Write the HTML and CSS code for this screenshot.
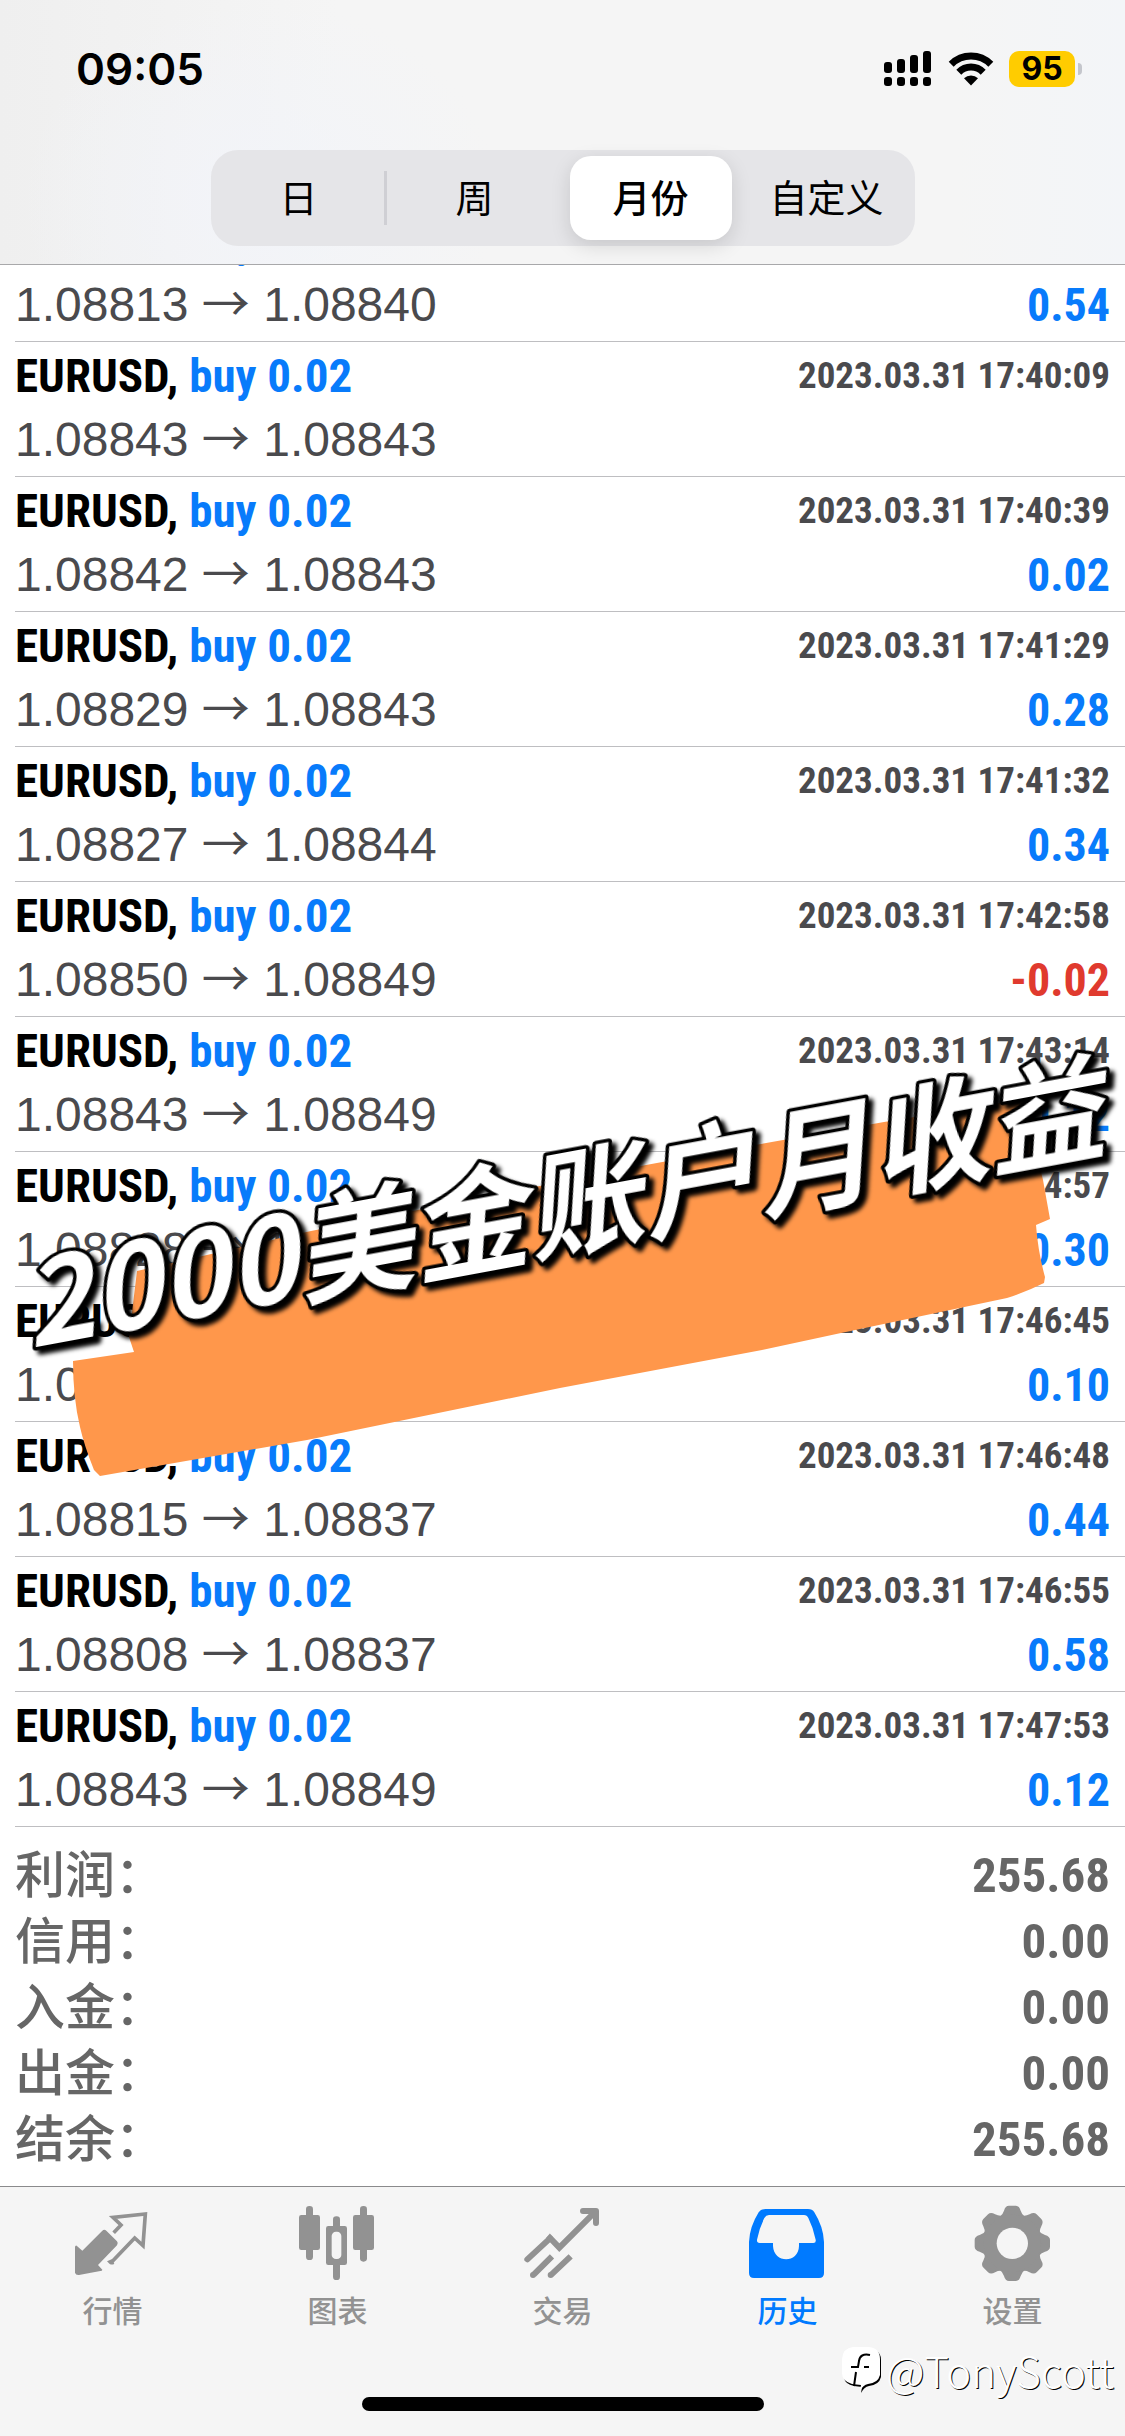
FILE: index.html
```
<!DOCTYPE html>
<html lang="zh-CN">
<head>
<meta charset="utf-8">
<meta name="viewport" content="width=device-width, initial-scale=1">
<title>历史</title>
<link rel="stylesheet" href="styles.css">
</head>
<body>
<div class="app">
  <header class="header">
    <div class="status">
      <time class="clock">09:05</time>
      <div class="status-icons">
        <svg class="signal" viewBox="0 0 48 36" aria-hidden="true">
          <rect x="0" y="11" width="8" height="11" rx="3"/><rect x="13" y="8" width="8" height="14" rx="3"/><rect x="26" y="4" width="8" height="18" rx="3"/><rect x="39" y="0" width="8" height="22" rx="3"/>
          <rect x="0" y="26" width="8" height="9" rx="3"/><rect x="13" y="26" width="8" height="9" rx="3"/><rect x="26" y="26" width="8" height="9" rx="3"/><rect x="39" y="26" width="8" height="9" rx="3"/>
        </svg>
        <svg class="wifi" viewBox="0 0 46 34" aria-hidden="true">
          <g fill="none" stroke="#000" stroke-width="7"><path d="M3.200 12.200a28 28 0 0 1 39.600 0"/><path d="M10.800 20.200a17.200 17.200 0 0 1 24.400 0"/></g>
          <path d="M23 33.500l-7-7.200a10 10 0 0 1 14 0z"/>
        </svg>
        <span class="battery">95</span><span class="battery-tip"></span>
      </div>
    </div>
    <form class="segments">
      <label class="segment"><input type="radio" name="period"><span>日</span></label>
      <label class="segment"><input type="radio" name="period"><span>周</span></label>
      <label class="segment"><input type="radio" name="period" checked><span>月份</span></label>
      <label class="segment"><input type="radio" name="period"><span>自定义</span></label>
    </form>
  </header>

  <main class="history">
    <ul class="deals">
      <li class="deal"><b class="symbol">EURUSD, <span class="side">buy 0.02</span></b><time class="when">2023.03.31 17:40:05</time><span class="prices">1.08813 <i class="arrow">→</i> 1.08840</span><b class="profit">0.54</b></li>
      <li class="deal"><b class="symbol">EURUSD, <span class="side">buy 0.02</span></b><time class="when">2023.03.31 17:40:09</time><span class="prices">1.08843 <i class="arrow">→</i> 1.08843</span></li>
      <li class="deal"><b class="symbol">EURUSD, <span class="side">buy 0.02</span></b><time class="when">2023.03.31 17:40:39</time><span class="prices">1.08842 <i class="arrow">→</i> 1.08843</span><b class="profit">0.02</b></li>
      <li class="deal"><b class="symbol">EURUSD, <span class="side">buy 0.02</span></b><time class="when">2023.03.31 17:41:29</time><span class="prices">1.08829 <i class="arrow">→</i> 1.08843</span><b class="profit">0.28</b></li>
      <li class="deal"><b class="symbol">EURUSD, <span class="side">buy 0.02</span></b><time class="when">2023.03.31 17:41:32</time><span class="prices">1.08827 <i class="arrow">→</i> 1.08844</span><b class="profit">0.34</b></li>
      <li class="deal"><b class="symbol">EURUSD, <span class="side">buy 0.02</span></b><time class="when">2023.03.31 17:42:58</time><span class="prices">1.08850 <i class="arrow">→</i> 1.08849</span><b class="profit loss">-0.02</b></li>
      <li class="deal"><b class="symbol">EURUSD, <span class="side">buy 0.02</span></b><time class="when">2023.03.31 17:43:14</time><span class="prices">1.08843 <i class="arrow">→</i> 1.08849</span><b class="profit">0.12</b></li>
      <li class="deal"><b class="symbol">EURUSD, <span class="side">buy 0.02</span></b><time class="when">2023.03.31 17:44:57</time><span class="prices">1.08828 <i class="arrow">→</i> 1.08843</span><b class="profit">0.30</b></li>
      <li class="deal"><b class="symbol">EURUSD, <span class="side">buy 0.02</span></b><time class="when">2023.03.31 17:46:45</time><span class="prices">1.08832 <i class="arrow">→</i> 1.08837</span><b class="profit">0.10</b></li>
      <li class="deal"><b class="symbol">EURUSD, <span class="side">buy 0.02</span></b><time class="when">2023.03.31 17:46:48</time><span class="prices">1.08815 <i class="arrow">→</i> 1.08837</span><b class="profit">0.44</b></li>
      <li class="deal"><b class="symbol">EURUSD, <span class="side">buy 0.02</span></b><time class="when">2023.03.31 17:46:55</time><span class="prices">1.08808 <i class="arrow">→</i> 1.08837</span><b class="profit">0.58</b></li>
      <li class="deal"><b class="symbol">EURUSD, <span class="side">buy 0.02</span></b><time class="when">2023.03.31 17:47:53</time><span class="prices">1.08843 <i class="arrow">→</i> 1.08849</span><b class="profit">0.12</b></li>
    </ul>
    <dl class="totals">
      <div class="total"><dt>利润：</dt><dd>255.68</dd></div>
      <div class="total"><dt>信用：</dt><dd>0.00</dd></div>
      <div class="total"><dt>入金：</dt><dd>0.00</dd></div>
      <div class="total"><dt>出金：</dt><dd>0.00</dd></div>
      <div class="total"><dt>结余：</dt><dd>255.68</dd></div>
    </dl>
    <svg class="banner" viewBox="0 0 1125 450">
      <path fill="#ff974b" d="M137 231L311 191L646 125L755 105L884 82L1005 62L1024 60L1043 140L1050 179L1036 185Q1038 212 1045 237L1044 243Q1026 252 1007 258L841 293L762 310L560 348L307 400L100 436L94 430Q84 405 80 387Q73 358 73 321L134 312L129 297Z"/>
      <g class="banner-text" transform="translate(31 308) rotate(-10.500)"><text>2000美金账户月收益</text></g>
    </svg>
  </main>

  <footer class="footer">
    <nav class="tabs">
      <a class="tab" href="#quotes">
        <svg viewBox="0 0 225 225" aria-hidden="true"><path d="M5 119L22 134L82 74Q88 69 94 74L126 106Q131 112 126 118L69 177L82 191Q82 195 76 195L12 207Q2 208 0 200V123Q1 117 5 119Z"/><path fill="none" stroke="currentColor" stroke-width="11" stroke-linecap="butt" d="M116 80L138 57L114 34L211 24L204 119L179 96L108 170"/><path d="M96 166l8 8q8 4 14-1l-8-13z"/></svg>
        <span>行情</span></a>
      <a class="tab" href="#charts">
        <svg viewBox="3 0 225 225" aria-hidden="true"><rect x="21" y="0" width="21" height="162" rx="10"/><rect x="0" y="27" width="63" height="105" rx="7"/><rect x="102" y="31" width="21" height="191" rx="10"/><rect x="81" y="60" width="63" height="117" rx="7"/><rect x="98" y="77" width="29" height="82" rx="13" fill="#f5f5f5"/><rect x="183" y="0" width="21" height="167" rx="10"/><rect x="162" y="27" width="63" height="105" rx="7"/></svg>
        <span>图表</span></a>
      <a class="tab" href="#trade">
        <svg viewBox="0 0 225 225" aria-hidden="true"><g fill="none" stroke="currentColor" stroke-width="18"><path stroke-linecap="round" d="M7 160L75 97"/><path d="M70 102L75 96L103 125L214 14"/><path stroke-linecap="round" stroke-linejoin="round" d="M174 15H213V51"/><path d="M81 151L26 206M137 151L79 206"/></g><circle cx="24" cy="207" r="9"/><circle cx="77" cy="207" r="9"/></svg>
        <span>交易</span></a>
      <a class="tab active" href="#history">
        <svg viewBox="0 0 225 225" aria-hidden="true"><path fill-rule="evenodd" d="M47 9H174Q187 9 193 19Q220 62 222 108V201Q222 216 207 216H12Q-3 216-3 201V108Q-1 62 26 19Q33 9 47 9ZM57 27Q48 27 43 36Q28 66 21 101Q20 111 29 111H69V120C71 173 146 173 147 120V111H190Q199 111 197 101Q190 66 175 36Q171 27 162 27Z"/></svg>
        <span>历史</span></a>
      <a class="tab" href="#settings">
        <svg viewBox="-112 -112 225 225" aria-hidden="true"><g><path id="tooth" d="M-38-80Q-29-85-25-98Q-21-113-10-113H10Q21-113 25-98Q29-85 38-80L0 0Z"/><use href="#tooth" transform="rotate(45)"/><use href="#tooth" transform="rotate(90)"/><use href="#tooth" transform="rotate(135)"/><use href="#tooth" transform="rotate(180)"/><use href="#tooth" transform="rotate(225)"/><use href="#tooth" transform="rotate(270)"/><use href="#tooth" transform="rotate(315)"/><circle r="86"/></g><circle r="47" fill="#f5f5f5"/></svg>
        <span>设置</span></a>
    </nav>
    <div class="home-bar"></div>
    <div class="credit">
      <svg class="credit-logo" viewBox="0 0 40 46" aria-hidden="true"><path fill="#000" d="M34 4Q39 6 39 13V30Q37 38 27 39Q22 40 19 46L20 40L12 39Q3 37 2 31Z"/><path fill="#fff" d="M11 0H27Q38 1 38 12V28Q36 36 26 37Q21 38 18 44L19 38L10 37Q0 34 0 26V12Q1 1 11 0Z"/><path fill="none" stroke="#000" stroke-width="2" d="M28 8Q18 6 17 14L16 20H9M22 20H27M14 25L12 39"/></svg>
      <span>@TonyScott</span>
    </div>
  </footer>
</div>
</body>
</html>
```
FILE: styles.css
```
* { box-sizing: border-box; }
body {
  margin: 0;
  background: #fff;
  color: #000;
  font-family: "Liberation Sans", "Noto Sans CJK SC", sans-serif;
}
ul, dl, dd { margin: 0; padding: 0; }
.app { display: flex; flex-direction: column; min-height: 100vh; }

.header {
  position: relative;
  z-index: 1;
  height: 265px;
  border-bottom: 1px solid #a8a8aa;
  background: radial-gradient(ellipse 240px 200px at 260px 200px, #f2f4f9, rgba(242, 244, 249, 0)), linear-gradient(90deg, #efefef, #f5f5f5 30%, #f5f5f5 85%, #f3f5f8);
}
.status {
  display: flex;
  justify-content: space-between;
  align-items: center;
  height: 150px;
  padding: 0 43px 12px 76px;
}
.clock { font: 600 44px "Inter", sans-serif; }
.status-icons { display: flex; align-items: center; }
.signal { width: 48px; height: 36px; }
.wifi { width: 46px; height: 34px; margin: 0 15px 0 16px; }
.battery {
  width: 66px;
  height: 36px;
  border-radius: 10px;
  background: #fc0;
  font: 700 32px/36px "Inter", sans-serif;
  text-align: center;
}
.battery-tip { width: 4px; height: 12px; margin-left: 3px; border-radius: 0 4px 4px 0; background: #c4c6cc; }

.segments {
  display: grid;
  grid-template-columns: repeat(4, 1fr);
  width: 704px;
  max-width: 100%;
  height: 96px;
  margin: 0 auto;
  padding: 6px 0;
  border-radius: 27px;
  background: #e5e5e8;
}
.segment { position: relative; display: flex; padding: 0 7px; font: 38px/1 "Noto Sans CJK SC", sans-serif; }
.segment input { position: absolute; opacity: 0; }
.segment span { display: flex; flex: 1; align-items: center; justify-content: center; padding-bottom: 4px; border-radius: 21px; }
.segment:first-child { background: linear-gradient(#cfcfd4, #cfcfd4) right center / 3px 54px no-repeat; }
.segment input:checked + span { background: #fff; font-weight: 500; box-shadow: 0 6px 20px rgba(0, 0, 0, .13); }

.history { position: relative; flex: 1; margin-top: -58px; }
.deals { list-style: none; padding-left: 15px; }
.deal {
  display: grid;
  grid-template-columns: 1fr auto;
  grid-template-rows: 64px 62px;
  height: 135px;
  padding-right: 15px;
  border-bottom: 1px solid #bebec1;
  white-space: nowrap;
}
.symbol, .when, .profit, .total dd { font-family: "Roboto Condensed", "Liberation Sans", sans-serif; font-weight: 700; }
.symbol { font-size: 47px; line-height: 68px; }
.side, .profit { color: #087bfb; }
.when { font-size: 37px; line-height: 68px; color: #4a4a4d; text-align: right; }
.prices { font-size: 48px; line-height: 68px; color: #4a4a4d; }
.arrow { font-family: "Noto Sans CJK SC", sans-serif; font-style: normal; line-height: 1; }
.profit { font-size: 46px; line-height: 68px; text-align: right; }
.loss { color: #e03a2e; }

.totals { padding: 15px 15px 14px; color: #666; }
.total { display: flex; justify-content: space-between; height: 66px; line-height: 68px; }
.total dt { font: 500 50px/58px "Noto Sans CJK SC", sans-serif; }
.total dd { font-size: 49px; }

.banner { position: absolute; top: 833px; left: 0; width: 100%; }
.banner-text {
  font: italic 700 117px "Noto Sans CJK SC", sans-serif;
  fill: #fff;
  stroke: #000;
  stroke-width: 7px;
  stroke-linejoin: round;
  paint-order: stroke;
  filter: drop-shadow(4px 5px 2px #000);
}

.footer { position: relative; height: 250px; border-top: 1px solid #8a8a8c; background: #f5f5f5; }
.tabs { display: grid; grid-template-columns: repeat(5, 1fr); padding-top: 19px; }
.tab {
  display: flex;
  flex-direction: column;
  align-items: center;
  gap: 10px;
  color: #929292;
  font: 500 30px/36px "Noto Sans CJK SC", sans-serif;
  text-decoration: none;
}
.tab svg { width: 75px; height: 75px; fill: currentColor; overflow: visible; }
.tab.active { color: #007aff; }
.home-bar { width: 402px; height: 14px; margin: 70px auto 0; border-radius: 7px; background: #000; }
.credit {
  position: absolute;
  right: 11px;
  bottom: 38px;
  display: flex;
  align-items: center;
  gap: 4px;
  color: #fff;
  font: 300 42px/56px "Noto Sans CJK SC", sans-serif;
  text-shadow: 1px 1px 0 #000;
}
.credit-logo { width: 40px; height: 46px; }
```
